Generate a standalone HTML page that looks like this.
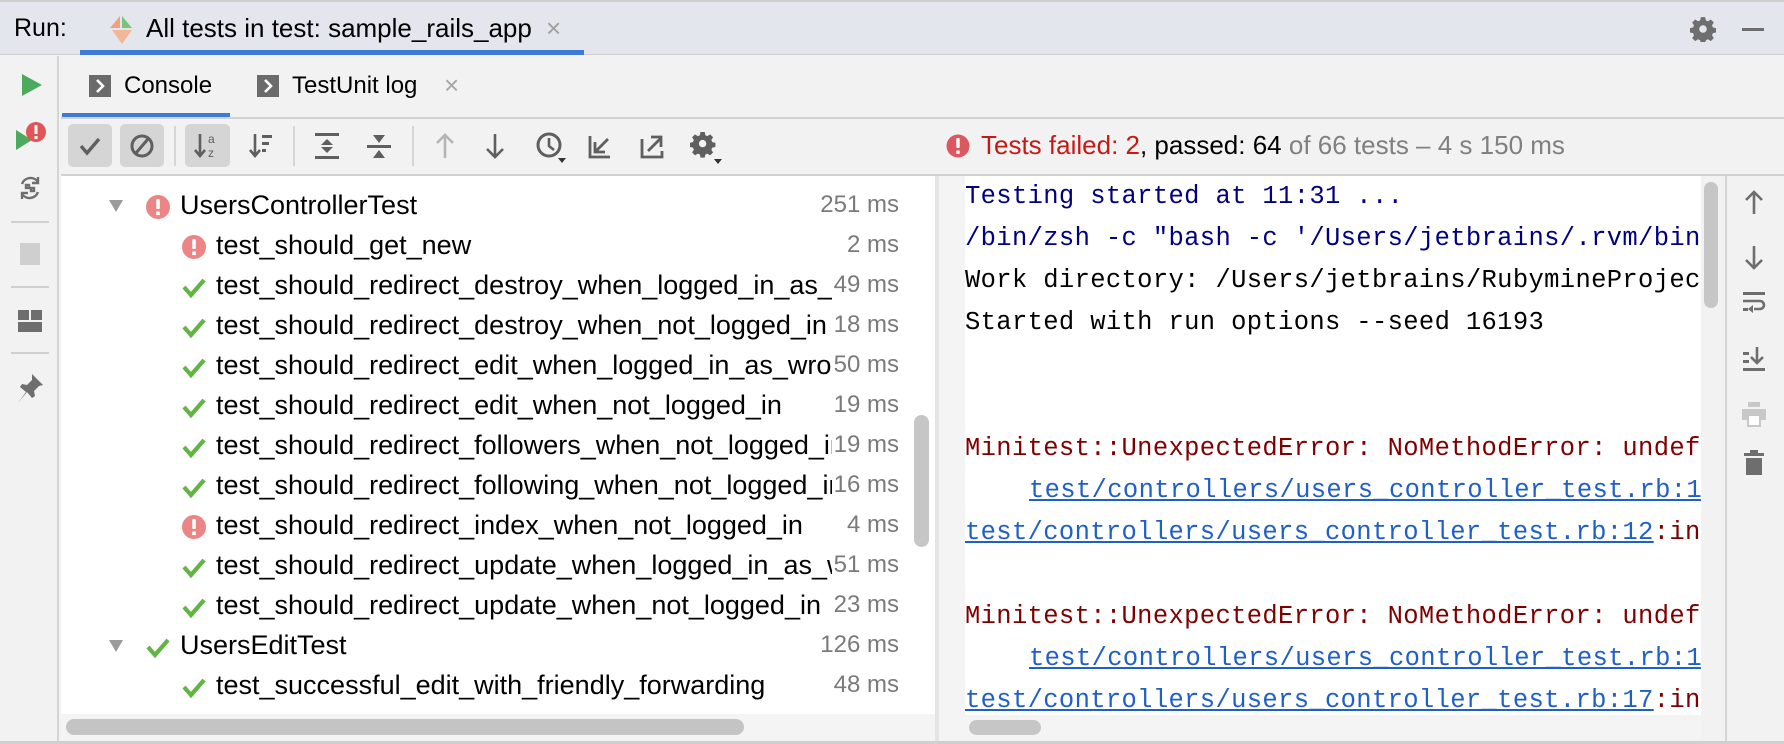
<!DOCTYPE html>
<html><head><meta charset="utf-8"><style>
*{margin:0;padding:0;box-sizing:border-box}
body{width:1784px;height:744px;overflow:hidden;background:#f2f2f2;font-family:"Liberation Sans",Arial,sans-serif;position:relative;color:#000}
.a{position:absolute}
.t{font-size:23px;white-space:nowrap}
.row{position:absolute;left:60px;width:848px;height:40px;line-height:40px;font-size:27px;white-space:nowrap;overflow:hidden}
.row .n{position:absolute;top:0}
.row .ms{position:absolute;right:0;top:0;color:#7a7a7a;background:#fff;padding-left:2px;padding-right:9px;font-size:24px}
.row svg{position:absolute;top:9px}
.mono{position:absolute;left:0;font-family:"Liberation Mono",monospace;font-size:25.5px;white-space:nowrap;line-height:42px;height:42px;letter-spacing:0.35px}
.blue{color:#000080}.red{color:#7f0000}.lnk{color:#1f5fc8;text-decoration:underline}
</style></head><body>
<!-- top bar -->
<div class="a" style="left:0;top:0;width:1784px;height:2px;background:#cfcfcf"></div>
<div class="a" style="left:0;top:2px;width:1784px;height:53px;background:#e3e6ed;border-bottom:1px solid #cfcfcf"></div>
<div class="a t" style="left:14px;top:14px;font-size:25px">Run:</div>
<svg class="a" style="left:108px;top:14px" width="28" height="32" viewBox="0 0 28 32"><polygon points="12,2 2,14 12,14" fill="#f0a080"/><polygon points="14,2 24,14 14,14" fill="#7cc47c"/><polygon points="4,16 24,16 14,30" fill="#f2b69a"/></svg>
<div class="a t" style="left:146px;top:13px;font-size:26px">All tests in test: sample_rails_app</div>
<div class="a t" style="left:546px;top:13px;color:#a0a0a0;font-size:26px">×</div>
<div class="a" style="left:80px;top:50px;width:504px;height:5px;background:#3e7bd2"></div>
<svg class="a" style="left:1690px;top:16px" width="26" height="26" viewBox="0 0 24 24"><path fill="#6e6e6e" d="M10 1h4l.6 3 2 .9 2.6-1.7 2.8 2.8-1.7 2.6.9 2 3 .6v4l-3 .6-.9 2 1.7 2.6-2.8 2.8-2.6-1.7-2 .9-.6 3h-4l-.6-3-2-.9-2.6 1.7-2.8-2.8 1.7-2.6-.9-2-3-.6v-4l3-.6.9-2-1.7-2.6 2.8-2.8 2.6 1.7 2-.9z"/><circle cx="12" cy="12" r="3.5" fill="#e3e6ed"/></svg>
<div class="a" style="left:1742px;top:28px;width:22px;height:3px;background:#6e6e6e"></div>

<!-- left strip -->
<div class="a" style="left:0;top:56px;width:59px;height:688px;background:#f2f2f2;border-right:2px solid #d4d4d4"></div>
<svg class="a" style="left:18px;top:72px" width="26" height="26"><polygon points="4,2 24,13 4,24" fill="#4caa5c"/></svg>
<svg class="a" style="left:14px;top:120px" width="34" height="34"><polygon points="2,10 18,20 2,30" fill="#4caa5c"/><circle cx="22" cy="12" r="10" fill="#e05555"/><rect x="20.5" y="5" width="3" height="9" fill="#fff"/><rect x="20.5" y="16" width="3" height="3" fill="#fff"/></svg>
<svg class="a" style="left:16px;top:174px" width="28" height="28" viewBox="0 0 28 28" fill="none" stroke="#6e6e6e" stroke-width="2.4"><path d="M6 10a9 9 0 0 1 16-2"/><path d="M22 3v6h-6"/><path d="M22 18a9 9 0 0 1-16 2"/><path d="M6 25v-6h6"/><rect x="10" y="11" width="3" height="3"/><rect x="15" y="14" width="3" height="3"/></svg>
<div class="a" style="left:11px;top:221px;width:38px;height:2px;background:#d0d0d0"></div>
<div class="a" style="left:20px;top:243px;width:20px;height:22px;background:#cfcfcf"></div>
<div class="a" style="left:11px;top:286px;width:38px;height:2px;background:#d0d0d0"></div>
<svg class="a" style="left:17px;top:309px" width="26" height="24"><rect x="1" y="1" width="11" height="10" fill="#6e6e6e"/><rect x="14" y="1" width="11" height="10" fill="#6e6e6e"/><rect x="1" y="13" width="24" height="10" fill="#6e6e6e"/></svg>
<div class="a" style="left:11px;top:352px;width:38px;height:2px;background:#d0d0d0"></div>
<svg class="a" style="left:15px;top:372px" width="30" height="32" viewBox="0 0 30 32"><path d="M17 2l11 11-4 1-5 5 1 5-3 2-5-6-9 11 8-11-6-5 2-3 5 1 5-5z" fill="#6e6e6e"/></svg>

<!-- tab row -->
<div class="a" style="left:61px;top:117px;width:1723px;height:2px;background:#d2d2d2"></div>
<svg class="a" style="left:89px;top:75px" width="22" height="22"><rect width="22" height="22" fill="#6b6b6b"/><path d="M8 5l6 6-6 6" stroke="#fff" stroke-width="2.6" fill="none"/></svg>
<div class="a t" style="left:124px;top:72px;font-size:24px">Console</div>
<div class="a" style="left:62px;top:113px;width:168px;height:4px;background:#3e7bd2"></div>
<svg class="a" style="left:257px;top:75px" width="22" height="22"><rect width="22" height="22" fill="#6b6b6b"/><path d="M8 5l6 6-6 6" stroke="#fff" stroke-width="2.6" fill="none"/></svg>
<div class="a t" style="left:292px;top:72px;font-size:24px">TestUnit log</div>
<div class="a t" style="left:444px;top:70px;color:#a8a8a8;font-size:26px">×</div>

<!-- toolbar -->
<div class="a" style="left:68px;top:124px;width:44px;height:43px;background:#d5d5d5;border-radius:5px"></div>
<svg class="a" style="left:76px;top:132px" width="28" height="28"><path d="M5 14l6 7 12-14" stroke="#5f5f5f" stroke-width="3.4" fill="none"/></svg>
<div class="a" style="left:120px;top:124px;width:44px;height:43px;background:#d5d5d5;border-radius:5px"></div>
<svg class="a" style="left:128px;top:132px" width="28" height="28"><circle cx="14" cy="14" r="10" stroke="#5f5f5f" stroke-width="3" fill="none"/><path d="M8 21L20 7" stroke="#5f5f5f" stroke-width="3"/></svg>
<div class="a" style="left:174px;top:126px;width:2px;height:40px;background:#d6d6d6"></div>
<div class="a" style="left:185px;top:124px;width:45px;height:43px;background:#d5d5d5;border-radius:5px"></div>
<svg class="a" style="left:193px;top:131px" width="30" height="30"><path d="M7 3v22M2 19l5 6 5-6" stroke="#5f5f5f" stroke-width="2.6" fill="none"/><text x="15" y="12" font-size="12" fill="#5f5f5f" font-family="Liberation Sans">a</text><text x="15" y="26" font-size="12" fill="#5f5f5f" font-family="Liberation Sans">z</text></svg>
<svg class="a" style="left:248px;top:131px" width="30" height="30"><path d="M7 3v22M2 19l5 6 5-6" stroke="#5f5f5f" stroke-width="2.6" fill="none"/><rect x="14" y="4" width="10" height="3" fill="#5f5f5f"/><rect x="14" y="11" width="7" height="3" fill="#5f5f5f"/><rect x="14" y="18" width="4" height="3" fill="#5f5f5f"/></svg>
<div class="a" style="left:293px;top:126px;width:2px;height:40px;background:#d6d6d6"></div>
<svg class="a" style="left:313px;top:131px" width="28" height="30"><rect x="2" y="2" width="24" height="3" fill="#5f5f5f"/><rect x="2" y="25" width="24" height="3" fill="#5f5f5f"/><polygon points="14,8 8,14 20,14" fill="#5f5f5f"/><polygon points="14,22 8,16 20,16" fill="#5f5f5f"/></svg>
<svg class="a" style="left:365px;top:131px" width="28" height="30"><rect x="2" y="14" width="24" height="3" fill="#5f5f5f"/><polygon points="14,12 8,4 20,4" fill="#5f5f5f"/><polygon points="14,19 8,27 20,27" fill="#5f5f5f"/></svg>
<div class="a" style="left:412px;top:126px;width:2px;height:40px;background:#d6d6d6"></div>
<svg class="a" style="left:432px;top:131px" width="26" height="30"><path d="M13 27V4M5 12l8-8 8 8" stroke="#b4b4b4" stroke-width="2.6" fill="none"/></svg>
<svg class="a" style="left:482px;top:131px" width="26" height="30"><path d="M13 3v23M5 18l8 8 8-8" stroke="#5f5f5f" stroke-width="2.6" fill="none"/></svg>
<svg class="a" style="left:534px;top:130px" width="34" height="34"><circle cx="15" cy="15" r="11" stroke="#5f5f5f" stroke-width="3" fill="none"/><path d="M15 8v8l5 4" stroke="#5f5f5f" stroke-width="2.6" fill="none"/><polygon points="24,28 32,28 28,33" fill="#333"/></svg>
<svg class="a" style="left:586px;top:131px" width="28" height="30"><path d="M4 5v21h20M9 21L22 8M9 11v10h10" stroke="#5f5f5f" stroke-width="2.8" fill="none"/></svg>
<svg class="a" style="left:638px;top:131px" width="28" height="30"><path d="M4 8v18h20v-6M10 20L23 7M13 6h10v10" stroke="#5f5f5f" stroke-width="2.8" fill="none"/></svg>
<svg class="a" style="left:690px;top:131px" width="34" height="34" viewBox="0 0 34 34"><g transform="scale(1.05)"><path fill="#5f5f5f" d="M10 1h4l.6 3 2 .9 2.6-1.7 2.8 2.8-1.7 2.6.9 2 3 .6v4l-3 .6-.9 2 1.7 2.6-2.8 2.8-2.6-1.7-2 .9-.6 3h-4l-.6-3-2-.9-2.6 1.7-2.8-2.8 1.7-2.6-.9-2-3-.6v-4l3-.6.9-2-1.7-2.6 2.8-2.8 2.6 1.7 2-.9z"/><circle cx="12" cy="12" r="3.5" fill="#f2f2f2"/></g><polygon points="24,28 32,28 28,33" fill="#333"/></svg>

<!-- status -->
<svg class="a" style="left:946px;top:133px" width="24" height="26"><circle cx="12" cy="13" r="11.5" fill="#db5860"/><rect x="10.3" y="5" width="3.4" height="10" rx="1" fill="#fff"/><rect x="10.3" y="17.5" width="3.4" height="3.4" fill="#fff"/></svg>
<div class="a t" style="left:981px;top:130px;font-size:26px"><span style="color:#c41a16">Tests failed: 2</span>, passed: 64 <span style="color:#808080">of 66 tests – 4 s 150 ms</span></div>

<!-- tree panel -->
<div class="a" style="left:61px;top:174px;width:1723px;height:2px;background:#d2d2d2"></div>
<div class="a" style="left:61px;top:176px;width:874px;height:540px;background:#fff"></div>
<div class="a" style="left:935px;top:176px;width:4px;height:568px;background:#e4e4e4"></div>

<div class="row" style="top:185px"><svg style="left:48px;top:14px" width="16" height="14"><polygon points="1,1 15,1 8,13" fill="#9a9a9a"/></svg><svg style="left:85px" width="26" height="26"><circle cx="13" cy="13" r="12" fill="#ec8585"/><rect x="11.2" y="5" width="3.6" height="10" rx="1" fill="#fff"/><rect x="11.2" y="17.5" width="3.6" height="3.6" fill="#fff"/></svg><span class="n" style="left:120px">UsersControllerTest</span><span class="ms">251 ms</span></div>
<div class="row" style="top:225px"><svg style="left:121px" width="26" height="26"><circle cx="13" cy="13" r="12" fill="#ec8585"/><rect x="11.2" y="5" width="3.6" height="10" rx="1" fill="#fff"/><rect x="11.2" y="17.5" width="3.6" height="3.6" fill="#fff"/></svg><span class="n" style="left:156px">test_should_get_new</span><span class="ms">2 ms</span></div>
<div class="row" style="top:265px"><svg style="left:121px" width="26" height="26"><path d="M3 13l7 8 13-15" stroke="#62b543" stroke-width="4.2" fill="none"/></svg><span class="n" style="left:156px">test_should_redirect_destroy_when_logged_in_as_wrong_user</span><span class="ms">49 ms</span></div>
<div class="row" style="top:305px"><svg style="left:121px" width="26" height="26"><path d="M3 13l7 8 13-15" stroke="#62b543" stroke-width="4.2" fill="none"/></svg><span class="n" style="left:156px">test_should_redirect_destroy_when_not_logged_in</span><span class="ms">18 ms</span></div>
<div class="row" style="top:345px"><svg style="left:121px" width="26" height="26"><path d="M3 13l7 8 13-15" stroke="#62b543" stroke-width="4.2" fill="none"/></svg><span class="n" style="left:156px">test_should_redirect_edit_when_logged_in_as_wrong_user</span><span class="ms">50 ms</span></div>
<div class="row" style="top:385px"><svg style="left:121px" width="26" height="26"><path d="M3 13l7 8 13-15" stroke="#62b543" stroke-width="4.2" fill="none"/></svg><span class="n" style="left:156px">test_should_redirect_edit_when_not_logged_in</span><span class="ms">19 ms</span></div>
<div class="row" style="top:425px"><svg style="left:121px" width="26" height="26"><path d="M3 13l7 8 13-15" stroke="#62b543" stroke-width="4.2" fill="none"/></svg><span class="n" style="left:156px">test_should_redirect_followers_when_not_logged_in</span><span class="ms">19 ms</span></div>
<div class="row" style="top:465px"><svg style="left:121px" width="26" height="26"><path d="M3 13l7 8 13-15" stroke="#62b543" stroke-width="4.2" fill="none"/></svg><span class="n" style="left:156px">test_should_redirect_following_when_not_logged_in</span><span class="ms">16 ms</span></div>
<div class="row" style="top:505px"><svg style="left:121px" width="26" height="26"><circle cx="13" cy="13" r="12" fill="#ec8585"/><rect x="11.2" y="5" width="3.6" height="10" rx="1" fill="#fff"/><rect x="11.2" y="17.5" width="3.6" height="3.6" fill="#fff"/></svg><span class="n" style="left:156px">test_should_redirect_index_when_not_logged_in</span><span class="ms">4 ms</span></div>
<div class="row" style="top:545px"><svg style="left:121px" width="26" height="26"><path d="M3 13l7 8 13-15" stroke="#62b543" stroke-width="4.2" fill="none"/></svg><span class="n" style="left:156px">test_should_redirect_update_when_logged_in_as_wrong_user</span><span class="ms">51 ms</span></div>
<div class="row" style="top:585px"><svg style="left:121px" width="26" height="26"><path d="M3 13l7 8 13-15" stroke="#62b543" stroke-width="4.2" fill="none"/></svg><span class="n" style="left:156px">test_should_redirect_update_when_not_logged_in</span><span class="ms">23 ms</span></div>
<div class="row" style="top:625px"><svg style="left:48px;top:14px" width="16" height="14"><polygon points="1,1 15,1 8,13" fill="#9a9a9a"/></svg><svg style="left:85px" width="26" height="26"><path d="M3 13l7 8 13-15" stroke="#62b543" stroke-width="4.2" fill="none"/></svg><span class="n" style="left:120px">UsersEditTest</span><span class="ms">126 ms</span></div>
<div class="row" style="top:665px"><svg style="left:121px" width="26" height="26"><path d="M3 13l7 8 13-15" stroke="#62b543" stroke-width="4.2" fill="none"/></svg><span class="n" style="left:156px">test_successful_edit_with_friendly_forwarding</span><span class="ms">48 ms</span></div>
<!-- tree scrollbars -->
<div class="a" style="left:908px;top:176px;width:27px;height:540px;background:#fff"></div>
<div class="a" style="left:914px;top:415px;width:15px;height:132px;background:#c6c6c6;border-radius:8px"></div>
<div class="a" style="left:61px;top:714px;width:874px;height:30px;background:#f4f4f4"></div>
<div class="a" style="left:66px;top:719px;width:678px;height:16px;background:#c4c4c4;border-radius:8px"></div>

<!-- console -->
<div class="a" style="left:939px;top:176px;width:762px;height:568px;background:#f4f4f4"></div>
<div class="a" style="left:965px;top:176px;width:736px;height:539px;background:#fff"></div>
<div class="a" style="left:1701px;top:176px;width:24px;height:568px;background:#f2f2f2"></div>
<div class="a" style="left:1704px;top:182px;width:14px;height:126px;background:#c6c6c6;border-radius:7px"></div>
<div class="a" style="left:969px;top:720px;width:72px;height:15px;background:#c6c6c6;border-radius:8px"></div>
<div class="a" style="left:1725px;top:176px;width:2px;height:568px;background:#d4d4d4"></div>
<div class="a" style="left:965px;top:176px;width:736px;height:539px;overflow:hidden">
<div class="mono blue" style="top:0">Testing started at 11:31 ...</div>
<div class="mono blue" style="top:42px">/bin/zsh -c "bash -c '/Users/jetbrains/.rvm/bin/rvm</div>
<div class="mono" style="top:84px">Work directory: /Users/jetbrains/RubymineProjects</div>
<div class="mono" style="top:126px">Started with run options --seed 16193</div>
<div class="mono red" style="top:252px">Minitest::UnexpectedError: NoMethodError: undefined</div>
<div class="mono" style="left:64px;top:294px"><span class="lnk">test/controllers/users_controller_test.rb:12</span></div>
<div class="mono red" style="top:336px"><span class="lnk">test/controllers/users_controller_test.rb:12</span>:in</div>
<div class="mono red" style="top:420px">Minitest::UnexpectedError: NoMethodError: undefined</div>
<div class="mono" style="left:64px;top:462px"><span class="lnk">test/controllers/users_controller_test.rb:17</span></div>
<div class="mono red" style="top:504px"><span class="lnk">test/controllers/users_controller_test.rb:17</span>:in</div>
</div>

<!-- right toolbar -->
<svg class="a" style="left:1742px;top:188px" width="24" height="28"><path d="M12 26V4M4 12l8-8 8 8" stroke="#6e6e6e" stroke-width="2.6" fill="none"/></svg>
<svg class="a" style="left:1742px;top:244px" width="24" height="28"><path d="M12 2v22M4 16l8 8 8-8" stroke="#6e6e6e" stroke-width="2.6" fill="none"/></svg>
<svg class="a" style="left:1741px;top:290px" width="26" height="26"><rect x="2" y="2" width="22" height="3" fill="#6e6e6e"/><path d="M2 11h17a4 4 0 0 1 0 8h-6" stroke="#6e6e6e" stroke-width="2.6" fill="none"/><polygon points="12,15 12,23 7,19" fill="#6e6e6e"/><rect x="2" y="18" width="5" height="3" fill="#6e6e6e"/></svg>
<svg class="a" style="left:1741px;top:345px" width="26" height="28"><rect x="2" y="23" width="22" height="3" fill="#6e6e6e"/><path d="M16 2v16M10 12l6 6 6-6" stroke="#6e6e6e" stroke-width="2.6" fill="none"/><rect x="2" y="7" width="6" height="3" fill="#6e6e6e"/><rect x="2" y="15" width="6" height="3" fill="#6e6e6e"/></svg>
<svg class="a" style="left:1741px;top:400px" width="26" height="28"><rect x="7" y="2" width="12" height="5" fill="#c8c8c8"/><rect x="1" y="9" width="24" height="11" fill="#c8c8c8"/><rect x="7" y="15" width="12" height="11" fill="#fff" stroke="#c8c8c8" stroke-width="2"/></svg>
<svg class="a" style="left:1743px;top:450px" width="22" height="26"><rect x="1" y="3" width="20" height="3" fill="#6e6e6e"/><rect x="7" y="0" width="8" height="4" fill="#6e6e6e"/><rect x="3" y="8" width="16" height="17" fill="#6e6e6e"/></svg>
<div class="a" style="left:0;top:741px;width:1784px;height:3px;background:#cfcfcf"></div>
</body></html>
